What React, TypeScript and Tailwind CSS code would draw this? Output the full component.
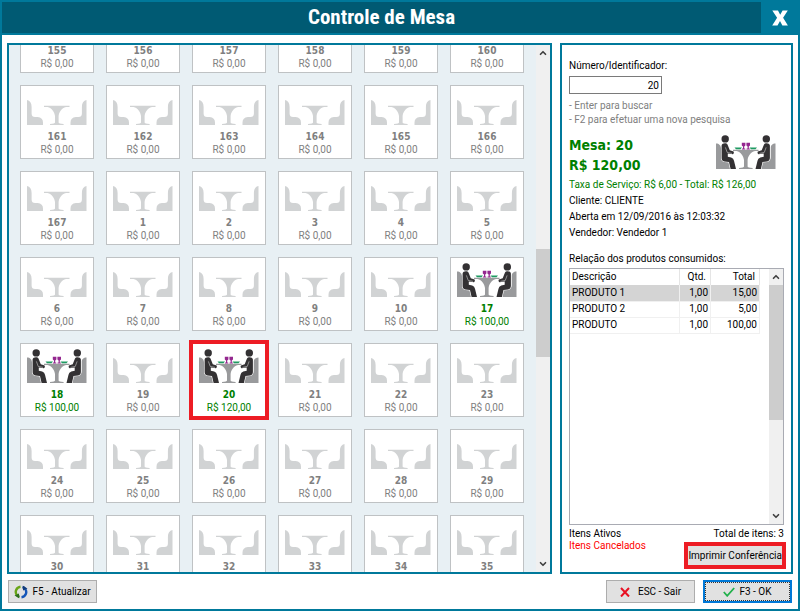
import { ReactNode } from "react";
import { ChevronDown, ChevronUp } from "lucide-react";

interface Mesa {
  numero: number;
  total?: string;
  ocupada?: boolean;
  selecionada?: boolean;
}

function livres(numeros: number[], total?: string): Mesa[] {
  return numeros.map((numero) => ({ numero, total }));
}

const mesas: Mesa[] = [
  ...livres([155, 156, 157, 158, 159, 160], "0,00"),
  ...livres([161, 162, 163, 164, 165, 166], "0,00"),
  ...livres([167, 1, 2, 3, 4, 5], "0,00"),
  ...livres([6, 7, 8, 9, 10], "0,00"),
  { numero: 17, total: "100,00", ocupada: true },
  { numero: 18, total: "100,00", ocupada: true },
  ...livres([19], "0,00"),
  { numero: 20, total: "120,00", ocupada: true, selecionada: true },
  ...livres([21, 22, 23], "0,00"),
  ...livres([24, 25, 26, 27, 28, 29], "0,00"),
  ...livres([30, 31, 32, 33, 34, 35]),
];

const produtos = [
  { descricao: "PRODUTO 1", qtd: "1,00", total: "15,00" },
  { descricao: "PRODUTO 2", qtd: "1,00", total: "5,00" },
  { descricao: "PRODUTO", qtd: "1,00", total: "100,00" },
];

function Lugar({ ocupada }: { ocupada?: boolean }) {
  if (!ocupada) {
    return <path d="M0 9c3 .5 4.600 3 4.600 7v6.500q0 3.500 3.500 3.500h2.500q5.400.5 5.400 5.500V34H0z" />;
  }

  return (
    <g>
      <path d="M0 8.500c3 0 5 2 5 5V22q0 4.500 4.500 4.500h2q3 0 3.500 4l.5 3.500H0z" />
      <path
        d="M5.600 10.400C6 8 10.600 7.600 11.600 9.800l2.200 5.400 3.800 1.400q1 1.600-.6 2.600l-5.200-.8v3.400l3.400.8q2.400.8 2.800 3.200L20 34h-5.400l-1.600-7-4.600-.6q-3-.6-2.800-4z"
        fill="#333133"
        stroke="#fff"
        strokeWidth="1.200"
        paintOrder="stroke"
      />
      <circle cx="9.200" cy="3.900" r="3.700" fill="#333133" />
      <path d="m9.400 12.400 1.800 5 4.800 1" fill="none" stroke="#ccc" strokeWidth=".6" />
    </g>
  );
}

function MesaIcon({ ocupada }: { ocupada?: boolean }) {
  return (
    <svg
      viewBox="0 0 60 34"
      className="h-[34px] w-[60px] shrink-0"
      fill={ocupada ? "#999a9c" : "#d1d3d4"}
      aria-hidden="true"
    >
      <Lugar ocupada={ocupada} />
      <g transform="matrix(-1 0 0 1 59.500 0)">
        <Lugar ocupada={ocupada} />
      </g>
      <path d="M17 14.700h25.500V16H39c-4.500 1-6.800 5-7.400 9v6.600q0 1.200 5 1.400v1H23v-1q5-.2 5-1.400V25c-.6-4-3-8-7.500-9H17z" />
      {ocupada && (
        <>
          <path d="M18.500 12.600h7.500l-1.500 1.700h-4.500zM33.500 12.600H41l-1.500 1.700H35z" fill="#1f9a62" />
          <path
            d="M25.800 7.800h3.600v2.600l-1.200 1.200v2h1v.8h-3.200v-.8h1v-2l-1.200-1.200zM30.400 7.800H34v2.600l-1.200 1.200v2h1v.8h-3.200v-.8h1v-2l-1.200-1.200z"
            fill="#94278f"
          />
        </>
      )}
    </svg>
  );
}

function MesaCard({ mesa }: { mesa: Mesa }) {
  return (
    <button
      type="button"
      className={`relative flex h-[74px] flex-col items-center border border-[#bfc2c4] bg-white pt-[5px] ${
        mesa.ocupada ? "text-[#008000]" : "text-[#808080]"
      }`}
    >
      <MesaIcon ocupada={mesa.ocupada} />
      <span className="mt-[5px] font-['DejaVu_Sans_Condensed','DejaVu_Sans',sans-serif] leading-[13px] font-bold">
        {mesa.numero}
      </span>
      {mesa.total && <span className="leading-[13px]">R$ {mesa.total}</span>}
      {mesa.selecionada && (
        <span className="absolute -inset-1 border-4 border-[#ed1c24]" />
      )}
    </button>
  );
}

interface BotaoProps {
  children: ReactNode;
  foco?: boolean;
}

function Botao({ children, foco }: BotaoProps) {
  return (
    <button
      type="button"
      className={`flex h-[23px] w-[89px] items-center justify-center gap-1 bg-[#e1e1e1] whitespace-nowrap ${
        foco
          ? "border-2 border-[#0078d7] outline-1 -outline-offset-3 outline-dotted outline-[#333]"
          : "border border-[#adadad]"
      }`}
    >
      {children}
    </button>
  );
}

function AtualizarIcon() {
  return (
    <svg viewBox="0 0 14 14" className="size-3.5" fill="none" strokeWidth="2.400" aria-hidden="true">
      <path d="M6.500 1.800A5.200 5.200 0 0 0 3 10.300" stroke="#6aa516" />
      <path d="M3 10.300a5.200 5.200 0 0 0 2.500 1.700" stroke="#2f6f1c" />
      <path d="M7.500 12.200A5.200 5.200 0 0 0 11 3.700" stroke="#1456b8" />
      <path d="M11 3.700A5.200 5.200 0 0 0 8.500 2" stroke="#123c7c" />
      <path d="M.5 10.500 5 8.500v4.500z" fill="#2f6f1c" />
      <path d="M13.500 3.500 9 5.500V1z" fill="#123c7c" />
    </svg>
  );
}

export default function App() {
  return (
    <div className="flex h-screen min-h-[480px] flex-col border-2 border-[#00799b] bg-white font-['Roboto','Noto_Sans',sans-serif] text-[10px] leading-[14px] text-black">
      <header className="flex h-[33px] shrink-0 border-b-2 border-[#00799b] bg-[#00799b]">
        <h1 className="flex-1 bg-[#005a73] text-center font-['Roboto_Condensed','Roboto',sans-serif] text-[21px] leading-[30px] font-bold text-white">
          Controle de Mesa
        </h1>
        <button type="button" aria-label="Fechar" className="flex w-[37px] items-center justify-center">
          <svg viewBox="0 0 16 16" className="size-4" fill="#fff" aria-hidden="true">
            <path d="M.3.500H6l2.200 4.300L10.600.5h5.200l-4.700 7.300 4.800 7.700h-5.500L8 11l-2.500 4.500H.2l4.900-7.700z" />
          </svg>
        </button>
      </header>

      <main className="flex min-h-0 flex-1 gap-2 px-[5px] pt-2">
        <section className="flex min-w-0 flex-1 overflow-hidden border-2 border-[#00799b] bg-[#e8f0f4]">
          <div className="min-w-0 flex-1 overflow-hidden pr-3 pl-[11px]">
            {/* Lista já rolada até a linha das mesas 155 a 160 */}
            <div className="-mt-[46px] grid grid-cols-6 gap-3">
              {mesas.map((mesa) => (
                <MesaCard key={mesa.numero} mesa={mesa} />
              ))}
            </div>
          </div>
          <div className="flex w-3.5 flex-col items-center bg-[#f0f0f0]">
            <ChevronUp className="h-4 w-2.5 shrink-0 text-[#404040]" strokeWidth={4} />
            <div className="flex-[188]" />
            <div className="w-full flex-[108] bg-[#cdcdcd]" />
            <div className="flex-[199]" />
            <ChevronDown className="h-4 w-2.5 shrink-0 text-[#404040]" strokeWidth={4} />
          </div>
        </section>

        <aside className="flex w-[233px] shrink-0 flex-col border-2 border-[#00799b] px-[7px] pt-3.5 pb-[3px]">
          <label htmlFor="numero">Número/Identificador:</label>
          <input
            id="numero"
            type="text"
            defaultValue="20"
            className="mt-[3px] h-[18px] w-[93px] shrink-0 border border-[#7a7a7a] px-0.5 text-right outline-none"
          />
          <div className="mt-[5px] text-[#808080]">
            <p>- Enter para buscar</p>
            <p>- F2 para efetuar uma nova pesquisa</p>
          </div>
          <div className="mt-2 flex justify-between pr-2 text-[#008000]">
            <div className="font-['DejaVu_Sans_Condensed','DejaVu_Sans',sans-serif] text-[14px] leading-5 font-bold">
              <p>Mesa: 20</p>
              <p>R$ 120,00</p>
            </div>
            <MesaIcon ocupada />
          </div>
          <div className="mt-0.5 leading-4">
            <p className="text-[#008000]">Taxa de Serviço: R$ 6,00 - Total: R$ 126,00</p>
            <p>Cliente: CLIENTE</p>
            <p>Aberta em 12/09/2016 às 12:03:32</p>
            <p>Vendedor: Vendedor 1</p>
          </div>
          <p className="mt-2.5 leading-4">Relação dos produtos consumidos:</p>

          <div className="mt-px flex min-h-0 flex-1 border border-[#a9abb3]">
            <div className="flex-1">
              <table className="w-[190px] table-fixed">
                <thead>
                  <tr className="h-4">
                    <th className="border-r border-[#e5e5e5] pl-0.5 text-left font-normal">Descrição</th>
                    <th className="w-[31px] border-r border-[#e5e5e5] pr-1 text-right font-normal">Qtd.</th>
                    <th className="w-[49px] border-r border-[#e5e5e5] pr-1 text-right font-normal">Total</th>
                  </tr>
                </thead>
                <tbody>
                  {produtos.map((produto) => (
                    <tr key={produto.descricao} className="h-4 border-b border-[#f0f0f0] first:bg-[#d4d4d4]">
                      <td className="border-r border-[#f0f0f0] pl-0.5">{produto.descricao}</td>
                      <td className="border-r border-[#f0f0f0] pr-0.5 text-right">{produto.qtd}</td>
                      <td className="border-r border-[#f0f0f0] pr-0.5 text-right">{produto.total}</td>
                    </tr>
                  ))}
                </tbody>
              </table>
            </div>
            <div className="flex w-3.5 flex-col items-center bg-[#f0f0f0]">
              <ChevronUp className="h-4 w-2.5 shrink-0 text-[#404040]" strokeWidth={4} />
              <div className="w-full flex-[136] bg-[#cdcdcd]" />
              <div className="flex-[88]" />
              <ChevronDown className="h-4 w-2.5 shrink-0 text-[#404040]" strokeWidth={4} />
            </div>
          </div>

          <div className="mt-[3px] flex justify-between leading-3">
            <div>
              <p>Itens Ativos</p>
              <p className="text-[#ff0000]">Itens Cancelados</p>
            </div>
            <p>Total de itens: 3</p>
          </div>
          <button
            type="button"
            className="-mt-2.5 -mr-0.5 h-[27px] self-end border-4 border-[#ed1c24] bg-[#e1e1e1] whitespace-nowrap"
          >
            Imprimir Conferência
          </button>
        </aside>
      </main>

      <footer className="flex shrink-0 gap-2 px-1.5 py-1.5">
        <Botao>
          <AtualizarIcon />
          F5 - Atualizar
        </Botao>
        <div className="flex-1" />
        <Botao>
          <svg viewBox="0 0 10 10" className="mr-1 size-2.5" stroke="#e81123" strokeWidth="2" fill="none" aria-hidden="true">
            <path d="m1 1 8 8.500M9 1 1 9.500" />
          </svg>
          ESC - Sair
        </Botao>
        <Botao foco>
          <svg viewBox="0 0 12 10" className="h-2.5 w-3" stroke="#22b14c" strokeWidth="1.800" fill="none" aria-hidden="true">
            <path d="m.8 5 3.400 3.800L11.200 1" />
          </svg>
          F3 - OK
        </Botao>
      </footer>
    </div>
  );
}
